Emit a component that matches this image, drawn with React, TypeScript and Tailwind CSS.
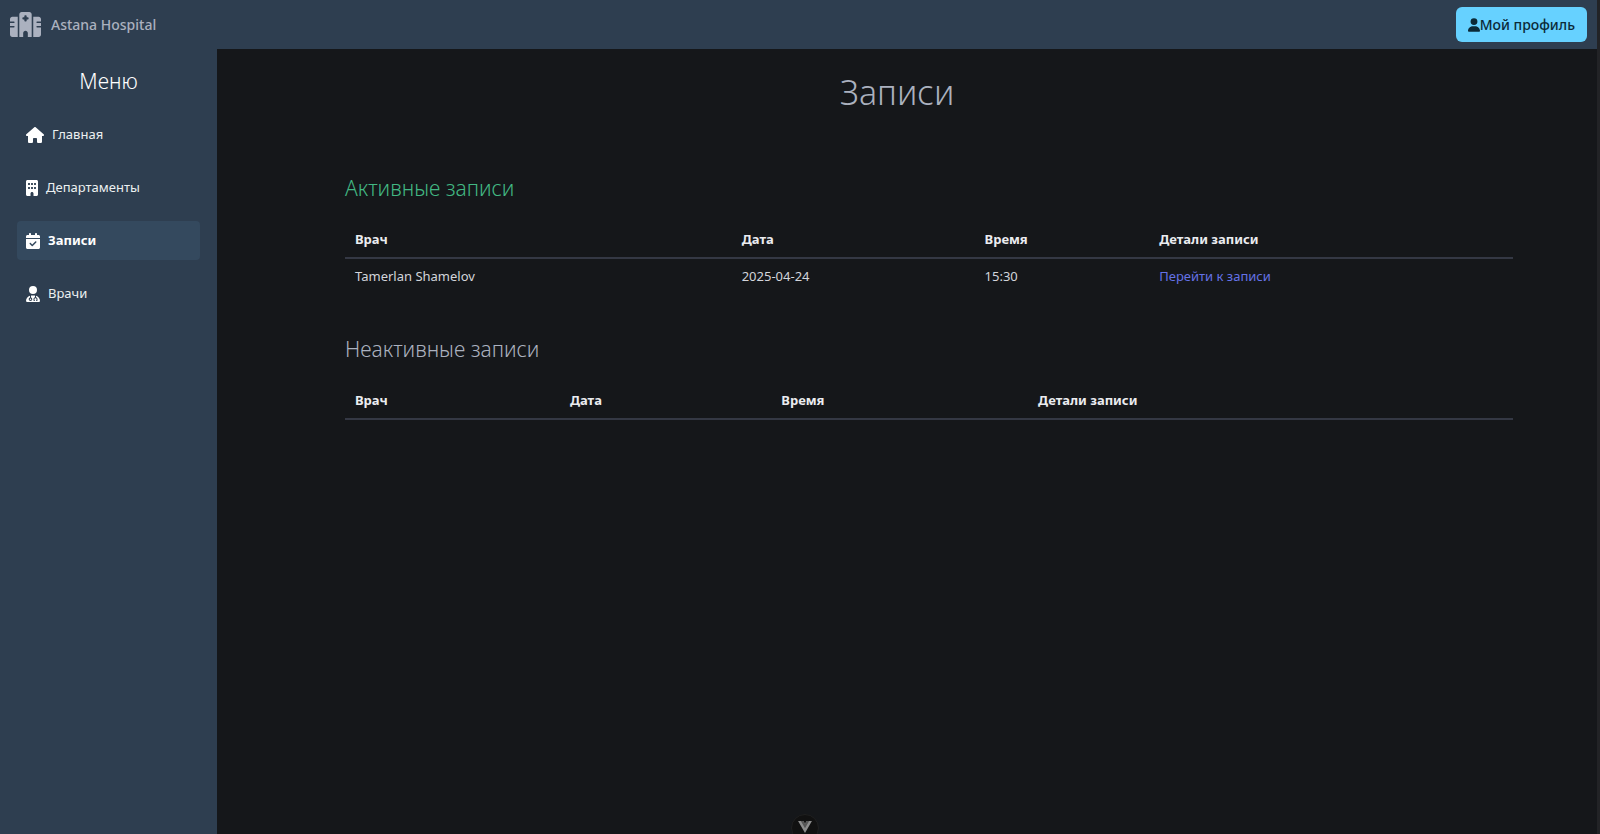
import { FaBuilding, FaCalendarCheck, FaHospital, FaHouse, FaUser, FaUserDoctor } from "react-icons/fa6";
import type { IconType } from "react-icons";

type MenuItem = { label: string; icon: IconType; iconSize: string; active?: boolean };

const menu: MenuItem[] = [
  { label: "Главная", icon: FaHouse, iconSize: "h-4 w-[18px] text-white" },
  { label: "Департаменты", icon: FaBuilding, iconSize: "h-4 w-3 text-white" },
  { label: "Записи", icon: FaCalendarCheck, iconSize: "h-4 w-3.5 text-white", active: true },
  { label: "Врачи", icon: FaUserDoctor, iconSize: "h-4 w-3.5 text-white" },
];

const columns = ["Врач", "Дата", "Время", "Детали записи"];

type Appointment = { doctor: string; date: string; time: string };

const activeAppointments: Appointment[] = [
  { doctor: "Tamerlan Shamelov", date: "2025-04-24", time: "15:30" },
];

function Header() {
  return (
    <header className="mr-[3px] flex h-[49px] items-center justify-between bg-[#2e3e50] px-2.5">
      <a href="#" className="flex items-center gap-2.5 text-sm font-medium text-[#abb1bf]">
        <FaHospital className="h-[25px] w-[31px]" />
        Astana Hospital
      </a>
      <button
        type="button"
        className="flex h-[35px] items-center rounded-md bg-[#66d1ff] px-3 text-sm font-medium text-[#0b2a38]"
      >
        <FaUser className="h-3.5 w-3" />
        Мой профиль
      </button>
    </header>
  );
}

function Sidebar() {
  return (
    <aside className="w-[217px] shrink-0 bg-[#2e3e50] px-[17px] pt-4">
      <h2 className="text-center text-[21px] leading-8 font-light text-white">Меню</h2>
      <nav className="mt-[18px] flex flex-col gap-3.5">
        {menu.map(({ label, icon: Icon, iconSize, active }) => (
          <a
            key={label}
            href="#"
            aria-current={active ? "page" : undefined}
            className={
              active
                ? "flex h-[39px] items-center gap-2 rounded bg-[#34495e] px-[9px] text-[13px] font-bold text-white"
                : "flex h-[39px] items-center gap-2 rounded px-[9px] text-[13px] text-[#ecf0f1]"
            }
          >
            <Icon className={iconSize} />
            {label}
          </a>
        ))}
      </nav>
    </aside>
  );
}

function AppointmentTable({ title, tone, rows }: {
  title: string;
  tone: string;
  rows: Appointment[];
}) {
  return (
    <section>
      <h2 className={tone}>{title}</h2>
      <table className="mt-[18px] w-full border-collapse text-left text-[13px]">
        <thead>
          <tr className="h-9 border-b-2 border-[#343844] text-[#ebecf0]">
            {columns.map((column) => (
              <th key={column} className="px-2.5 font-bold">{column}</th>
            ))}
          </tr>
        </thead>
        <tbody>
          {rows.map((row) => (
            <tr key={row.doctor} className="h-9 text-[#d3d5da]">
              <td className="px-2.5">{row.doctor}</td>
              <td className="px-2.5">{row.date}</td>
              <td className="px-2.5">{row.time}</td>
              <td className="px-2.5">
                <a href="#" className="text-[#6472e6]">Перейти к записи</a>
              </td>
            </tr>
          ))}
        </tbody>
      </table>
    </section>
  );
}

export default function App() {
  return (
    <div className="flex min-h-screen flex-col bg-[#222326] font-['Noto_Sans',sans-serif]">
      <Header />
      <div className="mr-[3px] flex flex-1 bg-[#15171a]">
        <Sidebar />
        <main className="flex-1 pt-[19px]">
          <h1 className="mr-5 text-center text-[34px] leading-[48px] font-light text-[#abb1bf]">Записи</h1>
          <div className="mt-14 mr-[84px] ml-32 flex flex-col gap-[39px]">
            <AppointmentTable
              title="Активные записи"
              tone="text-[21px] leading-8 font-light text-[#42b883]"
              rows={activeAppointments}
            />
            <AppointmentTable
              title="Неактивные записи"
              tone="text-[21px] leading-8 font-light text-[#abb1bf]"
              rows={[]}
            />
          </div>
        </main>
      </div>
      <button
        type="button"
        aria-label="Vue"
        className="fixed -bottom-2 left-1/2 ml-[-9px] flex size-7 items-center justify-center rounded-full border border-[#202020] bg-[#111111]"
      >
        <svg viewBox="0 0 256 221" className="mb-0.5 h-3 w-3.5">
          <path d="M204.800 0H256L128 220.800 0 0h97.920L128 51.200 157.440 0z" fill="#8c8c8c" />
          <path d="M50.560 0L128 133.120 204.800 0h-47.360L128 51.200 97.920 0z" fill="#555555" />
        </svg>
      </button>
    </div>
  );
}
